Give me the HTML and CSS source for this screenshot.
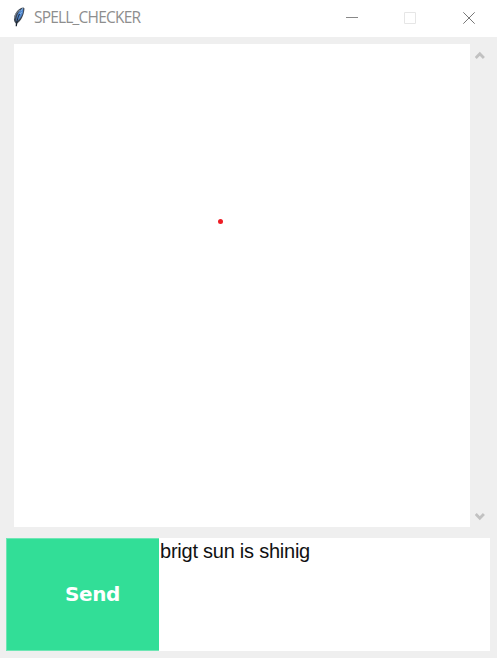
FILE: index.html
```html
<!DOCTYPE html>
<html lang="en">
<head>
<meta charset="utf-8">
<title>SPELL_CHECKER</title>
<link rel="stylesheet" href="styles.css">
</head>
<body>
<div class="window">
  <header class="titlebar">
    <svg class="feather" width="14" height="22" viewBox="0 0 14 22">
      <path d="M11.5 1.500C7 2 3 6 2 12c-.3 2 .3 4 1.700 5.300L3.800 20.500l1-.2.600-3C9 15 11.800 10 12.500 2.500z" fill="#3c4654"/>
      <path d="M11 2.500C7 4 4.600 8.500 4.200 15.500 8 13.500 10.800 9 11.200 5z" fill="#5288cf"/>
      <path d="M8 4C4.500 6 2.800 9 2.500 12.500" fill="none" stroke="#8a9098"/>
      <path d="M7.500 8C6 11 5 14 4.300 20" fill="none" stroke="#17202c"/>
      <path d="M9 5l2-3M8 8l2-2" fill="none" stroke="#91bce8" stroke-width=".8"/>
    </svg>
    <h1 class="title">SPELL_CHECKER</h1>
    <div class="controls">
      <svg width="12" height="12" viewBox="0 0 12 12"><path d="M0 5.500h12" stroke="#888"/></svg>
      <svg width="12" height="12" viewBox="0 0 12 12"><path d="M.5.5h11v11H.5z" fill="none" stroke="#e6e6e6"/></svg>
      <svg class="close" width="12" height="12" viewBox="0 0 12 12"><path d="M.3.300l11.400 11.400M11.700.300L.3 11.700" stroke="#777"/></svg>
    </div>
  </header>
  <main class="content">
    <section class="log">
      <div class="messages"><span class="dot"></span></div>
      <div class="scrollbar">
        <svg width="10" height="9" viewBox="0 0 10 9"><path d="M.7 7l4.100-4.300L8.900 7" fill="none" stroke="#c1c1c1" stroke-width="2.800"/></svg>
        <svg width="10" height="9" viewBox="0 0 10 9"><path d="M.7 2l4.100 4.300L8.900 2" fill="none" stroke="#c1c1c1" stroke-width="2.800"/></svg>
      </div>
    </section>
    <section class="entry">
      <button class="send">Send</button>
      <div class="input">brigt sun is shinig</div>
    </section>
  </main>
</div>
</body>
</html>
```
FILE: styles.css
```css
* { box-sizing: border-box; }
body { margin: 0; }
.window {
  width: 497px;
  height: 658px;
  display: flex;
  flex-direction: column;
  background: #efefef;
  overflow: hidden;
}
.titlebar {
  height: 37px;
  display: flex;
  align-items: center;
  padding: 0 22px 0 12px;
  background: #fff;
}
.feather { margin-top: -4px; }
.title {
  margin: 0 0 4px 8px;
  font: 400 15.5px/20px "Open Sans", sans-serif;
  letter-spacing: -0.8px;
  color: #8e8e8e;
}
.controls {
  display: flex;
  gap: 46px;
  margin: 0 0 2px auto;
}
.controls .close { margin-left: 1px; }
.controls svg, .scrollbar svg { display: block; }
.content {
  flex: 1;
  display: flex;
  flex-direction: column;
  gap: 11px;
  padding: 7px 6px 7px;
}
.log {
  flex: 1;
  display: flex;
  padding-left: 8px;
}
.messages {
  width: 456px;
  padding: 175px 0 0 203.500px;
  background: #fff;
}
.dot {
  display: block;
  width: 5px;
  height: 5px;
  border-radius: 50%;
  background: #ee1c24;
}
.scrollbar {
  display: flex;
  flex-direction: column;
  justify-content: space-between;
  padding: 7px 0 6px 5px;
}
.entry {
  height: 113px;
  display: flex;
}
.send {
  width: 153px;
  border: 1px solid #6ee6b4;
  border-right: 0;
  padding: 0 0 2px 19px;
  background: #32de97;
  color: #fff;
  font: bold 20px/24px "DejaVu Sans", sans-serif;
  letter-spacing: -0.4px;
}
.input {
  width: 331px;
  padding: 2px 1px;
  background: #fff;
  color: #111;
  font: 20px/23px "Liberation Sans", sans-serif;
  letter-spacing: -0.24px;
}
```
